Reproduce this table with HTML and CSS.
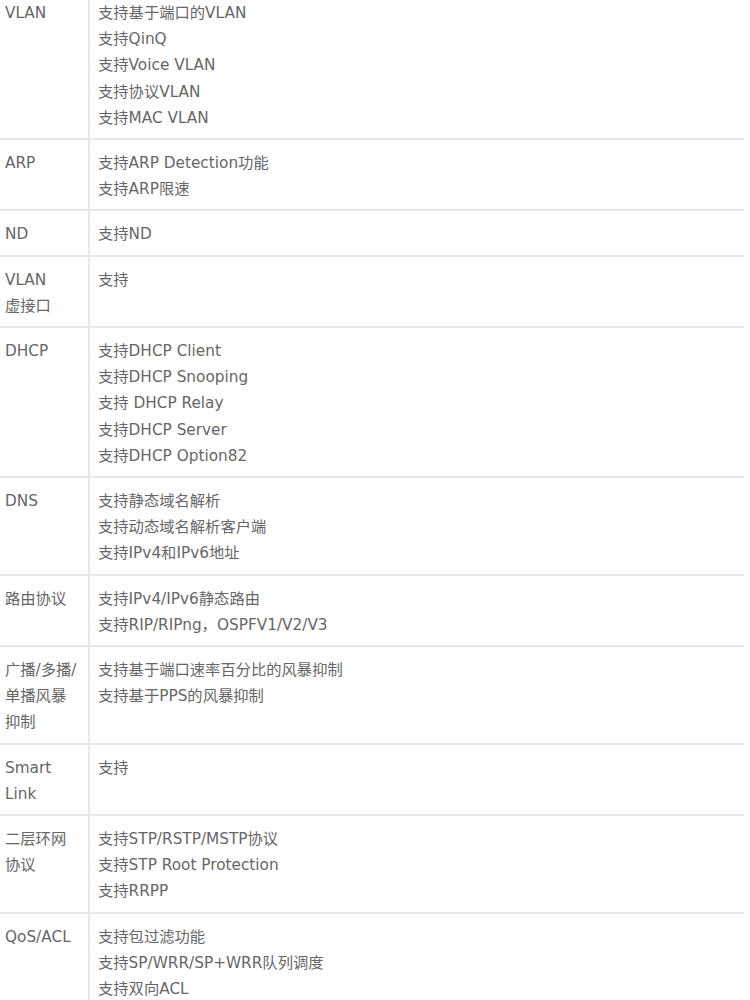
FILE: index.html
```html
<!DOCTYPE html>
<html lang="zh-CN">
<head>
    <meta charset="UTF-8">
    <meta name="viewport" content="width=device-width, initial-scale=1.0">
    <title>产品规格</title>
    <link rel="stylesheet" href="styles.css">
</head>
<body>

<table class="spec-table">
    <tr>
        <td class="spec-name">VLAN</td>
        <td class="spec-value">支持基于端口的VLAN<br>支持QinQ<br>支持Voice VLAN<br>支持协议VLAN<br>支持MAC VLAN</td>
    </tr>
    <tr>
        <td class="spec-name">ARP</td>
        <td class="spec-value">支持ARP Detection功能<br>支持ARP限速</td>
    </tr>
    <tr>
        <td class="spec-name">ND</td>
        <td class="spec-value">支持ND</td>
    </tr>
    <tr>
        <td class="spec-name">VLAN<br>虚接口</td>
        <td class="spec-value">支持</td>
    </tr>
    <tr>
        <td class="spec-name">DHCP</td>
        <td class="spec-value">支持DHCP Client<br>支持DHCP Snooping<br>支持 DHCP Relay<br>支持DHCP Server<br>支持DHCP Option82</td>
    </tr>
    <tr>
        <td class="spec-name">DNS</td>
        <td class="spec-value">支持静态域名解析<br>支持动态域名解析客户端<br>支持IPv4和IPv6地址</td>
    </tr>
    <tr>
        <td class="spec-name">路由协议</td>
        <td class="spec-value">支持IPv4/IPv6静态路由<br>支持RIP/RIPng，OSPFV1/V2/V3</td>
    </tr>
    <tr>
        <td class="spec-name">广播/多播/<br>单播风暴<br>抑制</td>
        <td class="spec-value">支持基于端口速率百分比的风暴抑制<br>支持基于PPS的风暴抑制</td>
    </tr>
    <tr>
        <td class="spec-name">Smart<br>Link</td>
        <td class="spec-value">支持</td>
    </tr>
    <tr>
        <td class="spec-name">二层环网<br>协议</td>
        <td class="spec-value">支持STP/RSTP/MSTP协议<br>支持STP Root Protection<br>支持RRPP</td>
    </tr>
    <tr>
        <td class="spec-name">QoS/ACL</td>
        <td class="spec-value">支持包过滤功能<br>支持SP/WRR/SP+WRR队列调度<br>支持双向ACL</td>
    </tr>
</table>

</body>
</html>
```

FILE: styles.css
```css
body {
    margin: 0;
    padding: 0;
    background-color: #ffffff;
    font-family: "DejaVu Sans", "Noto Sans CJK SC", sans-serif;
    font-size: 15.3px;
    color: #666666;
}
.spec-table {
    width: 744px;
    margin-top: -10px;
    border-collapse: collapse;
}
.spec-table td {
    padding: 10px 5px 7px 5px;
    line-height: 26.2px;
    vertical-align: top;
    text-align: left;
    border-bottom: 2px solid #e8e8e8;
}
.spec-name {
    width: 78px;
    border-right: 2px solid #e8e8e8;
}
.spec-table .spec-value {
    padding-left: 8px;
}
```
